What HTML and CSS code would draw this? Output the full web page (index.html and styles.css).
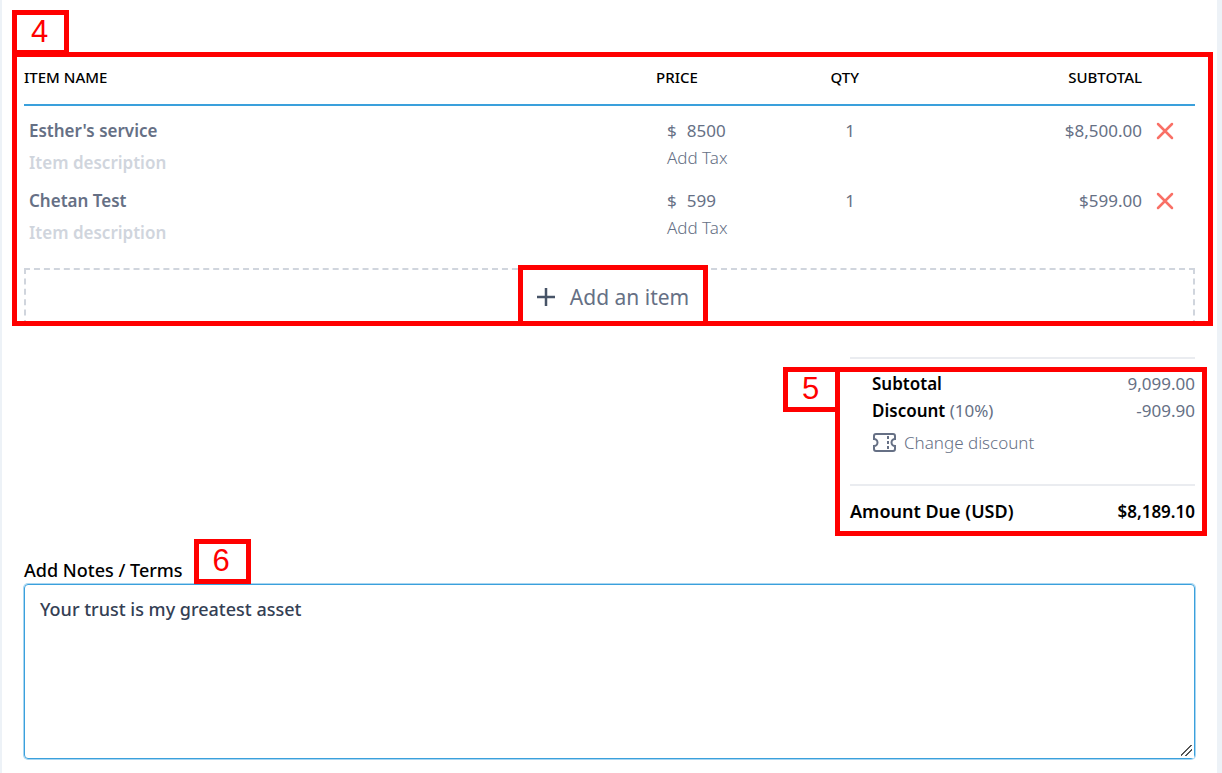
FILE: index.html
```html
<!DOCTYPE html>
<html lang="en">
<head>
  <meta charset="UTF-8" />
  <meta name="viewport" content="width=device-width, initial-scale=1.0"/>
  <title>Invoice items</title>
  <link rel="stylesheet" href="styles.css">
</head>
<body>

  <main class="sheet">

    <section class="items">
      <div class="outline outline-items"></div>
      <span class="step step-items">4</span>

      <table>
        <thead>
          <tr>
            <th class="col-name">Item name</th>
            <th class="col-price">Price</th>
            <th class="col-qty">Qty</th>
            <th class="col-subtotal">Subtotal</th>
            <th class="col-remove"></th>
          </tr>
        </thead>
        <tbody>
          <tr>
            <td>
              <input class="item-name" type="text" aria-label="Item name" value="Esther's service">
              <input class="item-desc" type="text" aria-label="Item description" placeholder="Item description">
            </td>
            <td class="price">
              <label class="amount">$ <input type="text" aria-label="Price" value="8500"></label>
              <a class="add-tax" href="#">Add Tax</a>
            </td>
            <td><input class="qty" type="text" aria-label="Quantity" value="1"></td>
            <td class="subtotal">$8,500.00</td>
            <td>
              <button class="remove" type="button" aria-label="Remove item">
                <svg viewBox="0 0 18 18"><path d="M2 2l14 14M16 2L2 16"/></svg>
              </button>
            </td>
          </tr>
          <tr>
            <td>
              <input class="item-name" type="text" aria-label="Item name" value="Chetan Test">
              <input class="item-desc" type="text" aria-label="Item description" placeholder="Item description">
            </td>
            <td class="price">
              <label class="amount">$ <input type="text" aria-label="Price" value="599"></label>
              <a class="add-tax" href="#">Add Tax</a>
            </td>
            <td><input class="qty" type="text" aria-label="Quantity" value="1"></td>
            <td class="subtotal">$599.00</td>
            <td>
              <button class="remove" type="button" aria-label="Remove item">
                <svg viewBox="0 0 18 18"><path d="M2 2l14 14M16 2L2 16"/></svg>
              </button>
            </td>
          </tr>
        </tbody>
      </table>

      <button class="add-item" type="button">
        <span class="add-item-label">
          <svg viewBox="0 0 20 20"><path d="M10 1v18M1 10h18"/></svg>
          Add an item
        </span>
      </button>
    </section>

    <section class="totals">
      <div class="outline outline-totals"></div>
      <span class="step step-totals">5</span>

      <div class="summary">
        <div class="line"><b>Subtotal</b><span>9,099.00</span></div>
        <div class="line"><span><b>Discount</b> (10%)</span><span>-909.90</span></div>
        <a class="change-discount" href="#">
          <svg viewBox="0 0 25 21">
            <path d="M4 2h17a2 2 0 0 1 2 2v3a3.5 3.5 0 0 0 0 7v3a2 2 0 0 1-2 2h-17a2 2 0 0 1-2-2v-3a3.500 3.500 0 0 0 0-7v-3a2 2 0 0 1 2-2z"/>
            <path d="M16 4v3M16 9v3M16 14v3"/>
          </svg>
          Change discount
        </a>
      </div>
      <div class="line due"><b class="due-label">Amount Due (USD)</b><b>$8,189.10</b></div>
    </section>

    <section class="notes">
      <div class="notes-head">
        <label for="notes">Add Notes / Terms</label>
        <span class="step">6</span>
      </div>
      <textarea id="notes">Your trust is my greatest asset</textarea>
    </section>

  </main>

</body>
</html>
```
FILE: styles.css
```css
* {
  box-sizing: border-box;
}

body {
  margin: 0;
  padding: 0 5px 0 2px;
  background-color: #edf2f7;
  color: #000;
  font-family: "Noto Sans", "Open Sans", sans-serif;
  font-size: 17px;
  line-height: 27px;
}

input,
button,
textarea {
  font: inherit;
  color: inherit;
  border: none;
  background: none;
  padding: 0;
}

a {
  color: inherit;
  text-decoration: none;
}

b {
  font-weight: 600;
  color: #000;
}

.sheet {
  min-height: 100vh;
  padding: 57px 22px 13px;
  background-color: #fff;
}

/* numbered red markers */
.outline {
  position: absolute;
  border: 5px solid #f00;
  pointer-events: none;
}

.step {
  display: block;
  width: 57px;
  height: 45px;
  padding-right: 2px;
  border: 5px solid #f00;
  color: #f00;
  font-family: "Liberation Sans", Arial, sans-serif;
  font-size: 31px;
  line-height: 34px;
  text-align: center;
}

.step-items,
.step-totals {
  position: absolute;
}

/* items */
.items {
  position: relative;
}

.outline-items {
  inset: -5px -18px 0 -12px;
}

.step-items {
  top: -47px;
  left: -12px;
}

table {
  width: 100%;
  table-layout: fixed;
  border-collapse: collapse;
  color: #667085;
}

th {
  height: 48px;
  padding: 0 0 7px;
  border-bottom: 2px solid #3aa0dc;
  color: #000;
  font-size: 15px;
  font-weight: 500;
  text-align: left;
  text-transform: uppercase;
}

.col-price {
  width: 120px;
}

.col-qty {
  width: 83px;
  text-align: right;
}

.col-subtotal {
  width: 283px;
  text-align: right;
}

.col-remove {
  width: 53px;
}

td {
  height: 70px;
  padding: 11px 0 0;
  vertical-align: top;
}

td input {
  display: block;
}

.item-name,
.item-desc {
  width: 100%;
  height: 27px;
  padding-left: 5px;
  font-weight: 600;
}

.item-desc {
  margin-top: 5px;
}

.item-desc::placeholder {
  color: #d0d5dd;
}

.price {
  padding-left: 11px;
}

.amount {
  display: flex;
  gap: 10px;
}

.amount input {
  width: 80px;
}

.add-tax {
  display: block;
  font-weight: 300;
}

.qty {
  width: 100%;
  padding-right: 4px;
  text-align: right;
}

.subtotal {
  text-align: right;
}

.remove {
  display: block;
  height: 27px;
  margin-left: 14px;
  cursor: pointer;
}

.remove svg {
  display: block;
  width: 18px;
  height: 18px;
  fill: none;
  stroke: #f97066;
  stroke-width: 2.5;
  stroke-linecap: round;
}

.add-item {
  display: flex;
  justify-content: center;
  width: 100%;
  height: 58px;
  margin-top: 22px;
  border: 2px dashed #d0d5dd;
  border-bottom: none;
  color: #667085;
  font-size: 21px;
  cursor: pointer;
}

.add-item-label {
  position: relative;
  display: flex;
  align-items: center;
  justify-content: center;
  gap: 14px;
  width: 190px;
  height: 61px;
  margin: -5px 0 0 6px;
  padding-top: 3px;
  border: 5px solid #f00;
  background-color: #fff;
}

.add-item svg {
  width: 20px;
  height: 20px;
  fill: none;
  stroke: #475467;
  stroke-width: 2.5;
}

/* totals */
.totals {
  position: relative;
  width: 345px;
  margin: 31px 0 0 auto;
  border-top: 2px solid #eaecf0;
  color: #667085;
}

.outline-totals {
  inset: 8px -12px -11px -15px;
}

.step-totals {
  top: 8px;
  left: -67px;
}

.summary {
  padding: 11px 0 28px 22px;
  border-bottom: 2px solid #eaecf0;
}

.line {
  display: flex;
  justify-content: space-between;
}

.change-discount {
  display: flex;
  align-items: center;
  gap: 7px;
  margin-top: 5px;
  font-weight: 300;
}

.change-discount svg {
  width: 25px;
  height: 21px;
  fill: none;
  stroke: #667085;
  stroke-width: 2;
}

.due {
  padding-top: 12px;
}

.due-label {
  font-size: 18px;
}

/* notes */
.notes {
  margin-top: 14px;
  font-size: 18px;
  font-weight: 500;
}

.notes-head {
  display: flex;
  align-items: flex-end;
  gap: 11px;
}

.notes textarea {
  display: block;
  width: 100%;
  height: 175px;
  padding: 11px 15px;
  border: 1px solid #3aa0dc;
  border-radius: 4px;
  box-shadow: 0 0 0 1px #a9d6f1;
  color: #344054;
  resize: both;
}

.notes textarea::-webkit-resizer {
  background: linear-gradient(135deg, #fff 44%, #555 44%, #555 52%, #fff 52%, #fff 66%, #555 66%, #555 74%, #fff 74%);
  border: 2px solid #fff;
}
```
